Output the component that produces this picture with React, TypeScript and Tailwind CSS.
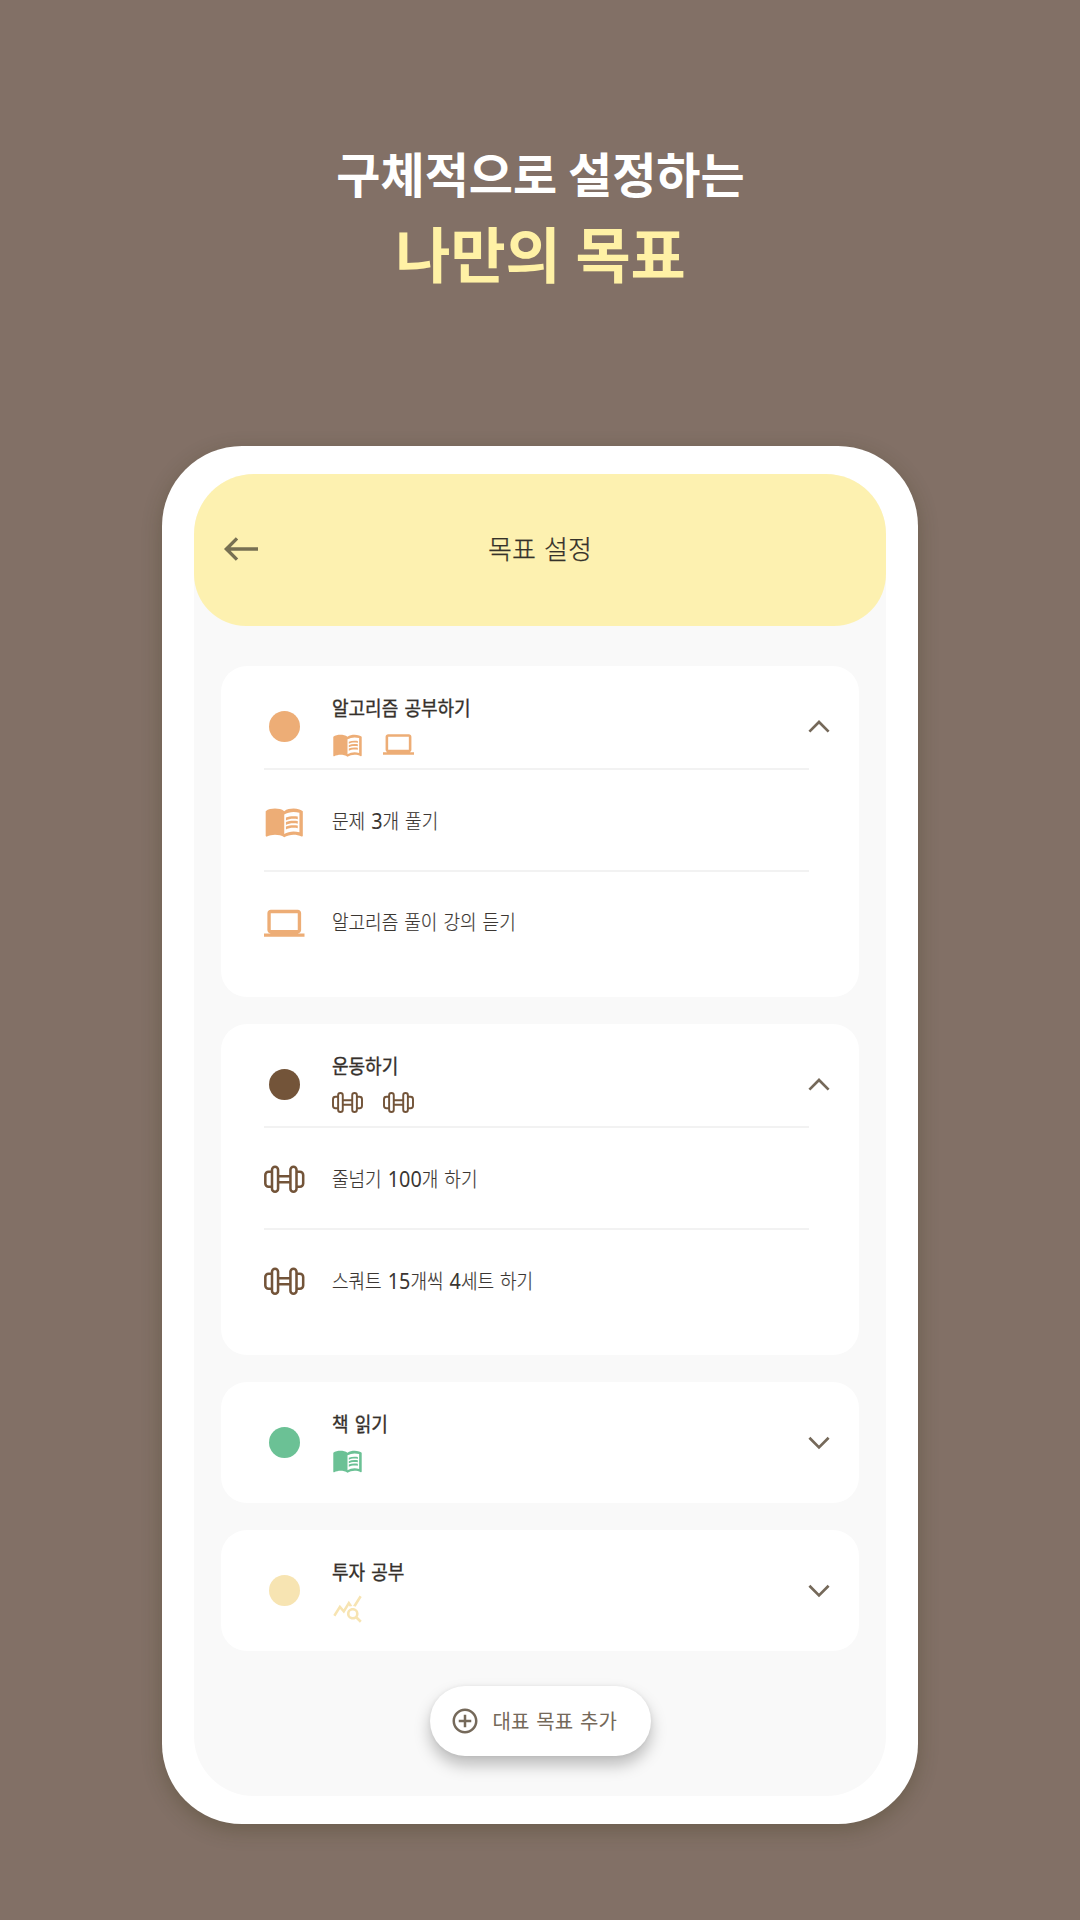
import React from "react";
import { MdAddCircleOutline, MdLaptop, MdMenuBook, MdQueryStats } from "react-icons/md";

type IconName = "book" | "laptop" | "dumbbell" | "stats";

type Goal = {
  title: string;
  dot: string;
  tint: string;
  icons: IconName[];
  items?: { icon: IconName; label: string }[];
};

const goals: Goal[] = [
  {
    title: "알고리즘 공부하기",
    dot: "bg-[#edad76]",
    tint: "text-[#edad76]",
    icons: ["book", "laptop"],
    items: [
      { icon: "book", label: "문제 3개 풀기" },
      { icon: "laptop", label: "알고리즘 풀이 강의 듣기" },
    ],
  },
  {
    title: "운동하기",
    dot: "bg-[#735439]",
    tint: "text-[#735439]",
    icons: ["dumbbell", "dumbbell"],
    items: [
      { icon: "dumbbell", label: "줄넘기 100개 하기" },
      { icon: "dumbbell", label: "스쿼트 15개씩 4세트 하기" },
    ],
  },
  { title: "책 읽기", dot: "bg-[#6bc195]", tint: "text-[#6bc195]", icons: ["book"] },
  { title: "투자 공부", dot: "bg-[#f7e4b2]", tint: "text-[#f7e4b2]", icons: ["stats"] },
];

function Dumbbell({ className }: { className?: string }) {
  return (
    <svg viewBox="0 0 40 40" fill="none" stroke="currentColor" strokeWidth="2.5" className={className}>
      <rect x="7.9" y="7.7" width="6" height="24.6" rx="3" />
      <rect x="26.1" y="7.7" width="6" height="24.6" rx="3" />
      <path d="M7.9 12.5H4.5a3.2 3.2 0 0 0-3.2 3.2v8.6a3.2 3.2 0 0 0 3.2 3.2h3.4M32.1 12.5h3.4a3.2 3.2 0 0 1 3.2 3.2v8.6a3.2 3.2 0 0 1-3.2 3.2h-3.4M13.9 17.1h12.2M13.9 22.9h12.2" />
    </svg>
  );
}

function Icon({ name, className }: { name: IconName; className: string }) {
  if (name === "book") return <MdMenuBook className={className} />;
  if (name === "laptop") return <MdLaptop className={className} />;
  if (name === "stats") return <MdQueryStats className={className} />;
  return <Dumbbell className={className} />;
}

function Chevron({ up }: { up: boolean }) {
  return (
    <svg viewBox="0 0 24 16" className="h-4 w-6 text-[#75695a]" fill="none" stroke="currentColor" strokeWidth="2.7">
      <path d={up ? "M2.4 12.6L12 3L21.6 12.6" : "M2.4 2.8L12 12.4L21.6 2.8"} />
    </svg>
  );
}

function Card({ goal }: { goal: Goal }) {
  return (
    <section className={goal.items ? "h-[331px] rounded-[26px] bg-white" : "h-[121px] rounded-[26px] bg-white"}>
      <div className="flex h-[102px] pl-12 pr-7">
        <div className={`mt-[45px] size-[31px] shrink-0 rounded-full ${goal.dot}`} />
        <div className="ml-8 flex flex-1 flex-col pt-[26px]">
          <h2 className="h-8 origin-left scale-x-[0.9] whitespace-nowrap text-[20px] leading-8 font-normal text-[#35302b] [-webkit-text-stroke:0.4px_#35302b] [word-spacing:2.4px]">
            {goal.title}
          </h2>
          <div className={`mt-[5px] flex gap-5 ${goal.tint}`}>
            {goal.icons.map((name, i) => (
              <Icon key={i} name={name} className="size-[31px]" />
            ))}
          </div>
        </div>
        <div className="mt-[53px]">
          <Chevron up={!!goal.items} />
        </div>
      </div>
      {goal.items?.map((item) => (
        <div key={item.label} className="ml-[43px] mr-[50px] flex h-[102px] items-center border-t-2 border-[#f2f2f2] pt-0.5">
          <Icon name={item.icon} className={`size-[40.5px] shrink-0 ${goal.tint}`} />
          <p className="ml-[27.5px] origin-left scale-x-[0.9] whitespace-nowrap pb-0.5 text-[20px] leading-8 font-light text-[#3b3632] [-webkit-text-stroke:0.2px_#3b3632] [word-spacing:2.3px]">
            {item.label.split(/(\d+)/).map((part, i) =>
              /^\d+$/.test(part) ? (
                <span key={i} className="font-['Noto_Sans',sans-serif] text-[22px] font-normal [-webkit-text-stroke:0]">
                  {part}
                </span>
              ) : (
                part
              ),
            )}
          </p>
        </div>
      ))}
    </section>
  );
}

export default function App() {
  return (
    <main className="flex h-[1920px] w-[1080px] flex-col items-center overflow-hidden bg-[#827066] font-['Noto_Sans_CJK_KR',sans-serif]">
      <header className="flex h-[446px] flex-col items-center pt-[136px] pl-px font-bold">
        <p className="text-[48px] leading-[72px] text-white">구체적으로 설정하는</p>
        <h1 className="text-[60px] leading-[88px] text-[#fff1a5] [word-spacing:1px]">나만의 목표</h1>
      </header>
      <div className="h-[1378px] w-[756px] rounded-[80px] bg-white px-8 py-7 shadow-[0_6px_20px_rgba(60,55,25,0.32)]">
        <div className="flex h-[1322px] flex-col rounded-[60px] bg-[#f9f9f9]">
          <div className="grid h-[152px] shrink-0 grid-cols-[1fr_auto_1fr] items-center rounded-t-[60px] rounded-b-[52px] bg-[#fdf1b0] pb-0.5">
            <svg viewBox="0 0 36 26" className="ml-[29px] h-[26px] w-9 text-[#777052]" fill="none" stroke="currentColor" strokeWidth="3.4">
              <path d="M3.5 13H35M14 2.4L3.4 13L14 23.6" />
            </svg>
            <h2 className="pb-[3px] text-[26px] font-light text-[#35322a] [-webkit-text-stroke:0.25px_#35322a] [word-spacing:2.5px]">목표 설정</h2>
          </div>
          <div className="mt-10 flex flex-col gap-[27px] px-[27px]">
            {goals.map((goal) => (
              <Card key={goal.title} goal={goal} />
            ))}
          </div>
          <button className="mt-[35px] flex h-[70px] w-[221px] items-center self-center rounded-full bg-white pl-[20.5px] text-[#75695a] shadow-[0_9px_16px_rgba(0,0,0,0.25),0_0_4px_rgba(0,0,0,0.06)]">
            <MdAddCircleOutline className="size-[30px]" />
            <span className="ml-[12.5px] whitespace-nowrap text-[20px] [word-spacing:2.5px]">대표 목표 추가</span>
          </button>
        </div>
      </div>
    </main>
  );
}
